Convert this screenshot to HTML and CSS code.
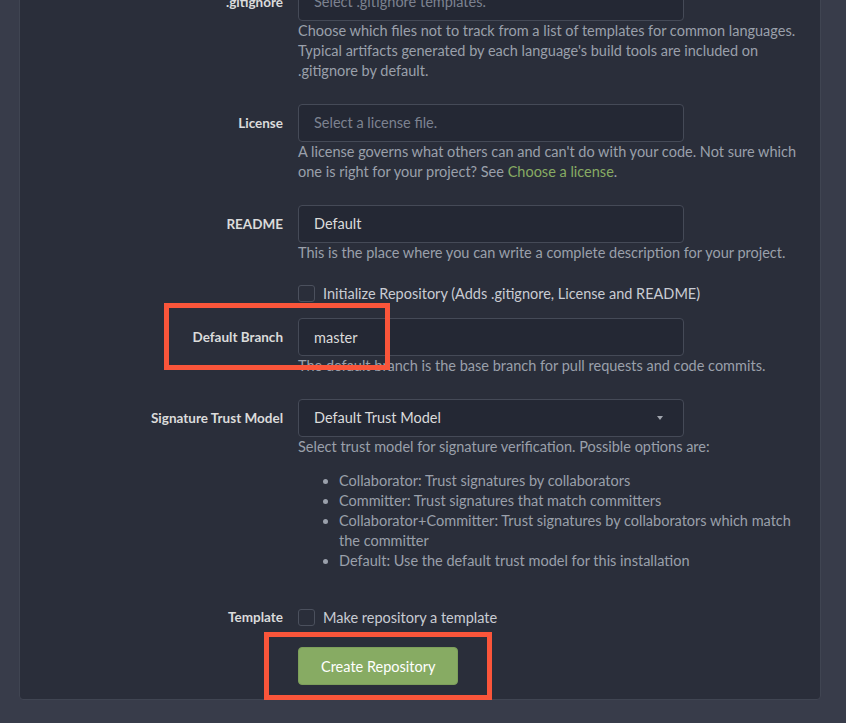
FILE: index.html
```html
<!DOCTYPE html>
<html lang="en">
<head>
  <meta charset="UTF-8" />
  <meta name="viewport" content="width=device-width, initial-scale=1.0" />
  <title>New Repository</title>
  <link rel="stylesheet" href="styles.css">
</head>
<body>
  <div class="page">
    <div class="segment">
      <form class="repo-form" onsubmit="return false">

        <div class="field">
          <label>.gitignore</label>
          <div class="control">
            <div class="dropdown placeholder">Select .gitignore templates.</div>
            <p class="help">Choose which files not to track from a list of templates for common languages. Typical artifacts generated by each language's build tools are included on .gitignore by default.</p>
          </div>
        </div>

        <div class="field">
          <label>License</label>
          <div class="control">
            <div class="dropdown placeholder">Select a license file.</div>
            <p class="help">A license governs what others can and can't do with your code. Not sure which one is right for your project? See <a href="#">Choose a license</a>.</p>
          </div>
        </div>

        <div class="field">
          <label>README</label>
          <div class="control">
            <div class="dropdown">Default</div>
            <p class="help">This is the place where you can write a complete description for your project.</p>
          </div>
        </div>

        <div class="field inline">
          <span></span>
          <label class="checkbox"><span class="box"></span>Initialize Repository (Adds .gitignore, License and README)</label>
        </div>

        <div class="field">
          <label>Default Branch</label>
          <div class="control">
            <input type="text" value="master">
            <p class="help">The default branch is the base branch for pull requests and code commits.</p>
          </div>
        </div>

        <div class="field trust">
          <label>Signature Trust Model</label>
          <div class="control">
            <div class="dropdown select">Default Trust Model<i class="caret"></i></div>
            <p class="help">Select trust model for signature verification. Possible options are:</p>
            <ul class="help-list">
              <li>Collaborator: Trust signatures by collaborators</li>
              <li>Committer: Trust signatures that match committers</li>
              <li>Collaborator+Committer: Trust signatures by collaborators which match the committer</li>
              <li>Default: Use the default trust model for this installation</li>
            </ul>
          </div>
        </div>

        <div class="field inline">
          <label>Template</label>
          <label class="checkbox"><span class="box"></span>Make repository a template</label>
        </div>

        <div class="field actions">
          <span></span>
          <div><button class="btn-green">Create Repository</button></div>
        </div>

      </form>
    </div>

    <!-- highlight frames -->
    <div class="mark mark-branch"></div>
    <div class="mark mark-create"></div>
  </div>
</body>
</html>
```

FILE: styles.css
```css
body {
  margin: 0;
  background: #383c4a;
  font-family: 'Lato', 'Noto Sans', sans-serif;
  font-size: 14.5px;
  color: #dbdbdb;
}
.page {
  position: relative;
  height: 723px;
  overflow: hidden;
}
.segment {
  margin: -30px 25px 0 19px;
  padding: 12px 0 14px;
  background: #2a2e3a;
  border: 1px solid #404552;
  border-radius: 0 0 4px 4px;
}
.field {
  display: grid;
  grid-template-columns: 263px 1fr;
  column-gap: 15px;
  margin-bottom: 23px;
}
.field > label {
  height: 38px;
  line-height: 38px;
  text-align: right;
  font-size: 13.5px;
  font-weight: bold;
  color: #dbdbdb;
}
.dropdown, input {
  display: block;
  box-sizing: border-box;
  width: 386px;
  height: 38px;
  padding: 0 15px;
  background: #242834;
  border: 1px solid #454a57;
  border-radius: 4px;
  color: #dbdbdb;
  font: inherit;
  line-height: 36px;
}
input {
  outline: none;
}
.placeholder {
  color: #7d8290;
}
.select {
  position: relative;
}
.caret {
  position: absolute;
  right: 20px;
  top: 16px;
  border-left: 3.5px solid transparent;
  border-right: 3.5px solid transparent;
  border-top: 4px solid #a0a4ad;
}
.help {
  margin: 0;
  width: 500px;
  line-height: 20px;
  color: #9aa0ab;
}
.help a {
  color: #87ab63;
  text-decoration: none;
}
.help-list {
  margin: 14px 0 0;
  padding-left: 41px;
  width: 460px;
  line-height: 20px;
  color: #9aa0ab;
}
.inline {
  margin-top: -1px;
  margin-bottom: 16px;
}
.field.inline > label {
  height: 17px;
  line-height: 17px;
}
.field > .checkbox {
  display: flex;
  align-items: center;
  gap: 8px;
  text-align: left;
  font-size: 14.5px;
  font-weight: normal;
  color: #c9ccd3;
}
.checkbox .box {
  flex: none;
  box-sizing: border-box;
  width: 17px;
  height: 17px;
  border: 1px solid #4b505d;
  border-radius: 3px;
  background: #2a2e3a;
}
.trust {
  margin-bottom: 39px;
}
.actions {
  margin: 21px 0 0;
}
.btn-green {
  height: 38px;
  padding: 0 22px;
  background: #87ab63;
  border: 1px solid #7d9f5b;
  border-radius: 4px;
  color: #fff;
  font: inherit;
  cursor: pointer;
}
.mark {
  position: absolute;
  box-sizing: border-box;
  border: 5px solid #fa553a;
}
.mark-branch {
  left: 164px;
  top: 303px;
  width: 226px;
  height: 67px;
}
.mark-create {
  left: 264px;
  top: 632px;
  width: 228px;
  height: 68px;
}
```
